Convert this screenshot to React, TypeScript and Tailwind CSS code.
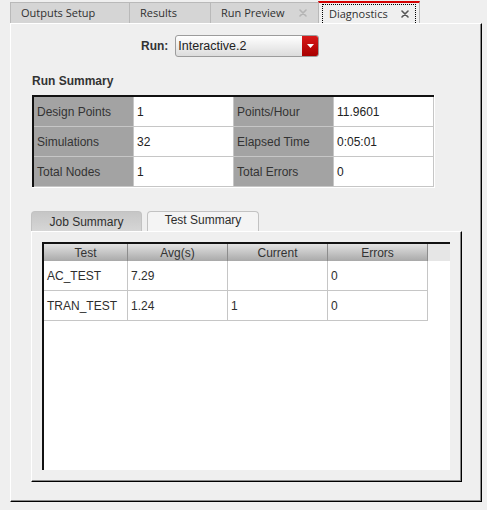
import React from 'react'

const tabs = [
  { label: 'Outputs Setup', w: 'w-[119px]' },
  { label: 'Results', w: 'w-[81px]' },
  { label: 'Run Preview', w: 'w-[108px]', close: true },
]

const summary = [
  ['Design Points', '1', 'Points/Hour', '11.9601'],
  ['Simulations', '32', 'Elapsed Time', '0:05:01'],
  ['Total Nodes', '1', 'Total Errors', '0'],
]

const tests = [
  ['AC_TEST', '7.29', '', '0'],
  ['TRAN_TEST', '1.24', '1', '0'],
]

function CloseIcon({ color }: { color: string }) {
  return (
    <svg width="8" height="8" viewBox="0 0 8 8" className="shrink-0">
      <path d="M1 1L7 7M7 1L1 7" stroke={color} strokeWidth="1.6" strokeLinecap="round" />
    </svg>
  )
}

export default function App() {
  return (
    <div className="w-[487px] h-[510px] bg-[#efefef] overflow-hidden font-['Liberation_Sans',Arial,sans-serif] text-[12px] text-[#2e2e2e]">
      {/* top tab strip */}
      <div className="flex items-end h-[23px] pl-[10px] font-['Open_Sans',sans-serif] text-[11px] text-[#303030]">
        {tabs.map((t) => (
          <div
            key={t.label}
            className={`${t.w} h-[21px] flex items-center pl-[10px] pr-[11px] justify-between bg-[#d5d5d5] border-l border-t border-[#b9b9b9]`}
          >
            <span>{t.label}</span>
            {t.close && <CloseIcon color="#b4b4b4" />}
          </div>
        ))}
        <div className="w-[102px] h-[22px] bg-[#efefef] border-t-2 border-t-[#d40000] border-l border-r border-l-[#b9b9b9] border-r-[#b9b9b9] px-[3px] pt-[1px]">
          <div className="h-full flex items-center justify-between pl-[6px] pr-[6px] border border-dotted border-black border-b-0">
            <span>Diagnostics</span>
            <CloseIcon color="#555" />
          </div>
        </div>
      </div>

      {/* main panel */}
      <div className="ml-[10px] w-[472px] h-[479px] border-l border-t border-l-white border-t-white border-r border-b border-r-black border-b-black shadow-[inset_-1px_-1px_0_#8a8a8a]">
        <div className="flex items-center mt-[11px] pl-[130px] gap-[7px]">
          <span className="font-bold text-[#333]">Run:</span>
          <div className="w-[144px] h-[22px] flex rounded-[3px] border border-[#9c9c9c] overflow-hidden bg-gradient-to-b from-white to-[#dcdcdc]">
            <span className="flex-1 flex items-center pl-[2px] text-[12.5px] text-[#222]">Interactive.2</span>
            <div className="w-[16px] flex items-center justify-center bg-gradient-to-b from-[#d81818] to-[#a80000]">
              <svg width="7" height="4" viewBox="0 0 7 4">
                <path d="M0 0H7L3.5 4Z" fill="#fff" />
              </svg>
            </div>
          </div>
        </div>

        <div className="mt-[17px] pl-[21px] font-bold text-[#333] leading-[14px]">Run Summary</div>

        <div className="mt-[7px] ml-[21px] w-[403px] border-r border-b border-white">
          <div className="border-t-2 border-l-2 border-[#111]">
            {summary.map((row, i) => (
              <div key={i} className="flex h-[30px]">
                {row.map((c, j) => (
                  <div
                    key={j}
                    className={`w-[100px] flex items-center pl-[3px] border-r border-b border-[#c6c6c6] ${
                      j % 2 === 0 ? 'bg-[#a3a3a3] text-[#333]' : 'bg-white text-[#222]'
                    }`}
                  >
                    {c}
                  </div>
                ))}
              </div>
            ))}
          </div>
        </div>

        {/* lower tabs */}
        <div className="mt-[23px] ml-[20px] flex items-end gap-[5px] h-[20px]">
          <div className="w-[111px] h-[20px] flex items-center justify-center rounded-t-[4px] border border-b-0 border-[#c2c2c2] bg-gradient-to-b from-[#c6c6c6] to-[#d6d6d6] text-[#2e2e2e]">
            Job Summary
          </div>
          <div className="w-[112px] h-[20px] flex items-center justify-center pb-[3px] rounded-t-[4px] border border-b-0 border-[#c2c2c2] bg-[#f4f4f4] text-[#2e2e2e]">
            Test Summary
          </div>
        </div>

        <div className="ml-[20px] w-[431px] h-[251px] border-l border-t border-l-white border-t-white border-r border-b border-r-black border-b-black shadow-[inset_-1px_-1px_0_#8a8a8a] pt-[10px] pl-[10px]">
          <div className="w-[408px] h-[228px] bg-white border-t-2 border-l-2 border-[#111]">
            <div className="flex h-[17px] bg-[#e6e6e6]">
              {['Test', 'Avg(s)', 'Current', 'Errors'].map((h, i) => (
                <div
                  key={h}
                  className={`${i === 0 ? 'w-[84px]' : 'w-[100px]'} flex items-center justify-center border-r border-[#8c8c8c] bg-gradient-to-b from-[#e2e2e2] to-[#a9a9a9] text-[#333]`}
                >
                  {h}
                </div>
              ))}
            </div>
            {tests.map((row, i) => (
              <div key={i} className="flex h-[30px]">
                {row.map((c, j) => (
                  <div
                    key={j}
                    className={`${j === 0 ? 'w-[84px]' : 'w-[100px]'} flex items-center pl-[3px] border-r border-b border-[#c6c6c6]`}
                  >
                    {c}
                  </div>
                ))}
              </div>
            ))}
          </div>
        </div>
      </div>
    </div>
  )
}
